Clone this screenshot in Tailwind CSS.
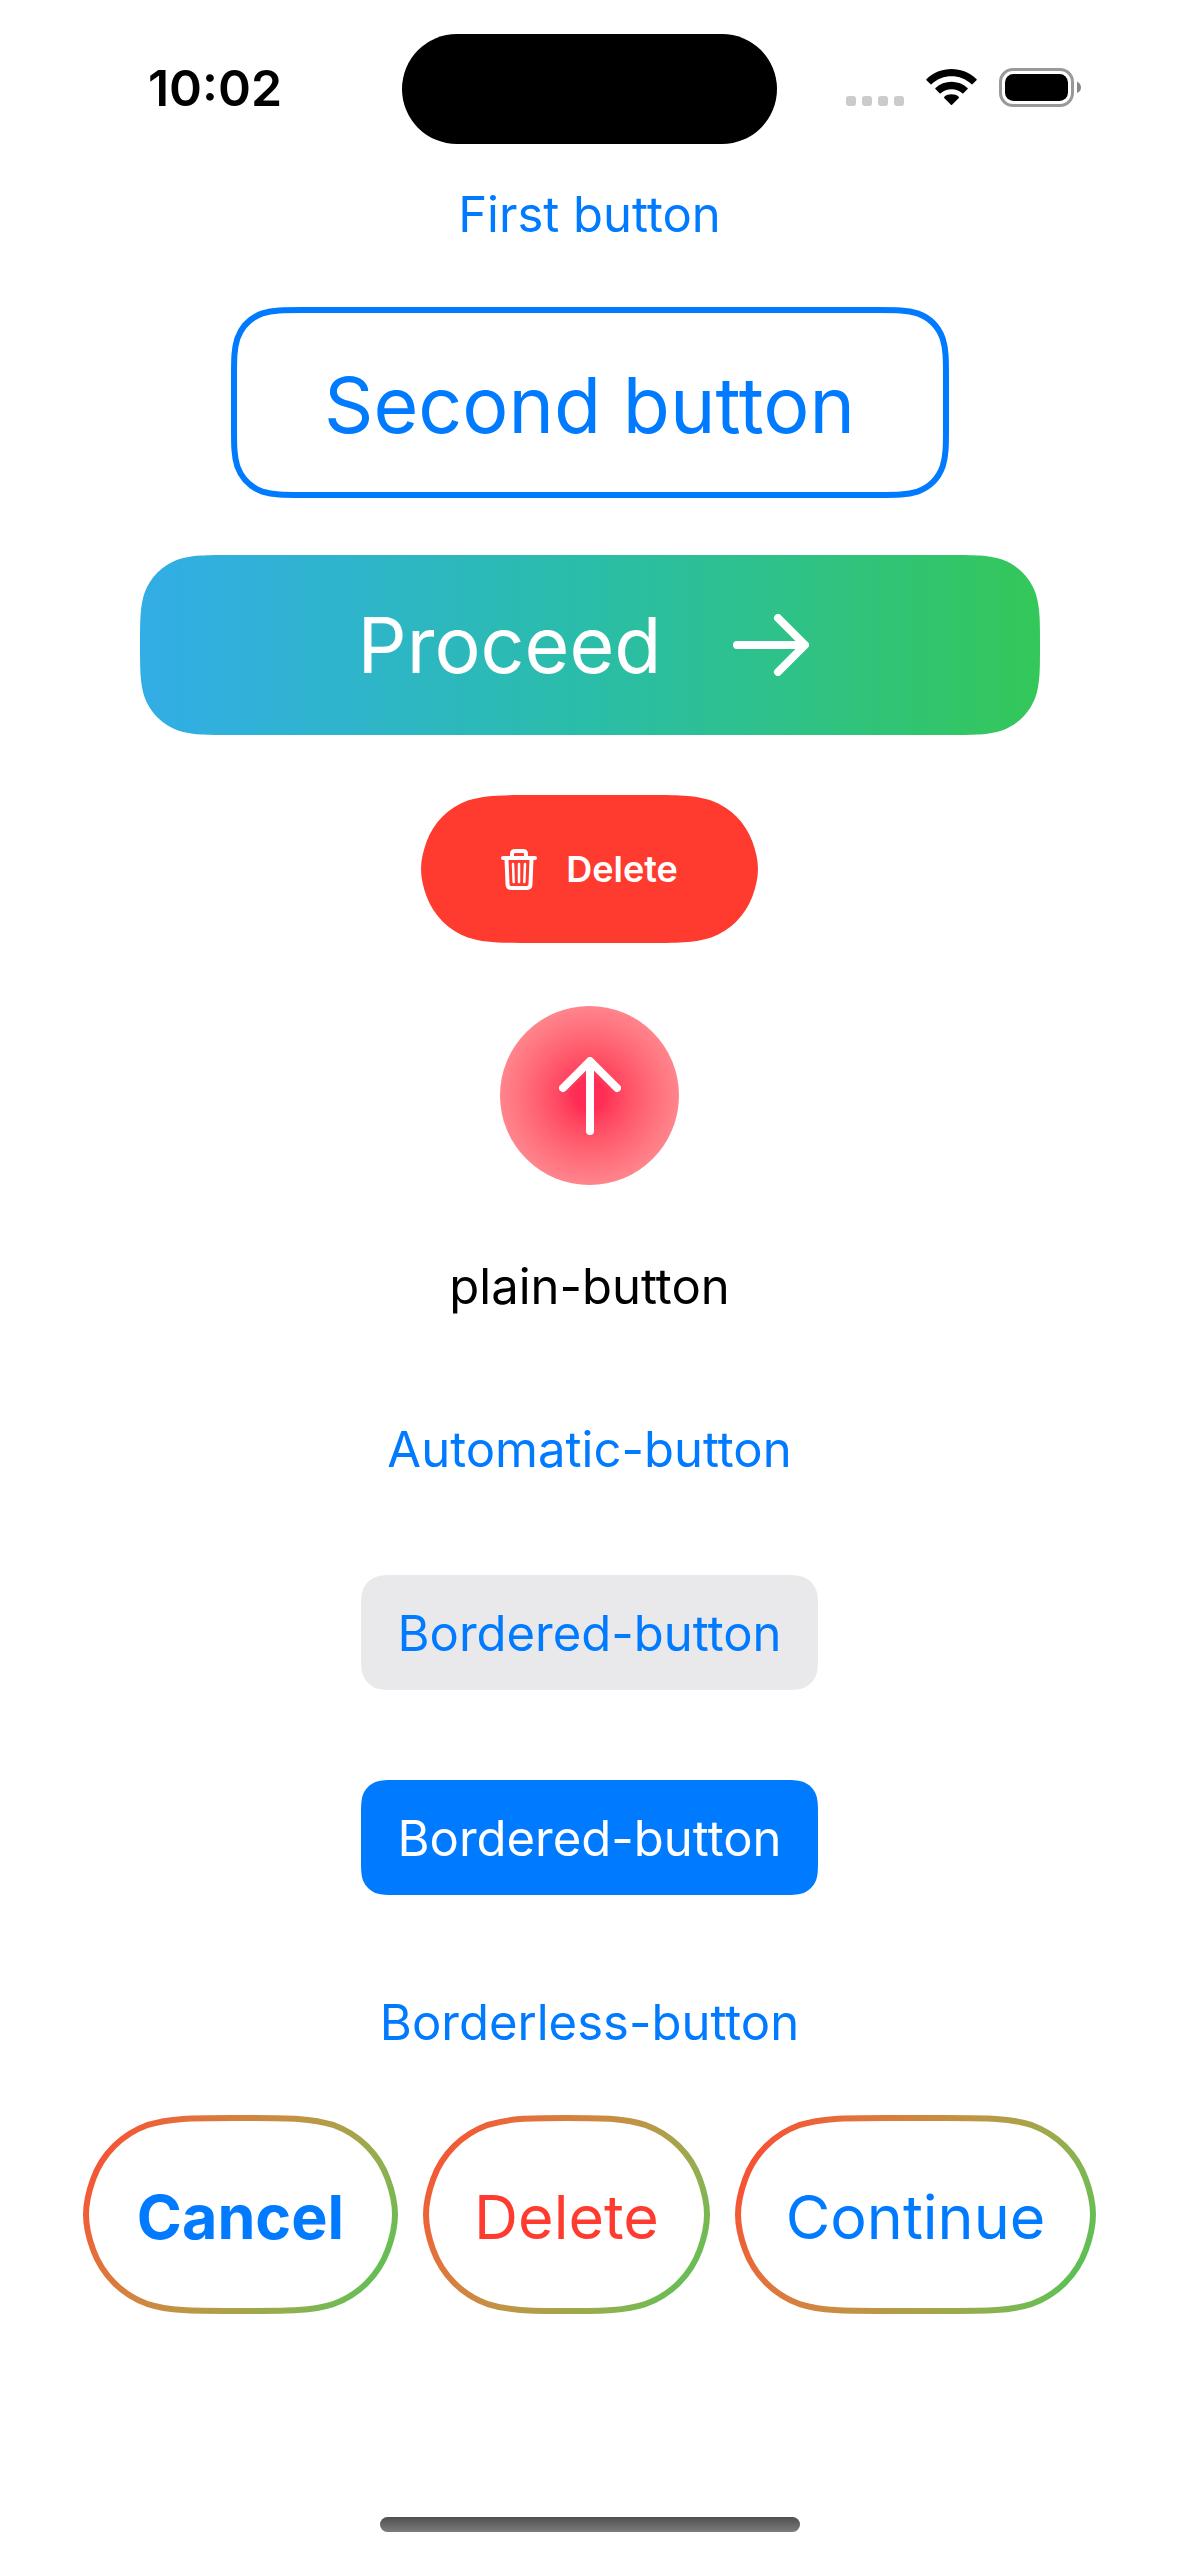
<!DOCTYPE html>
<html lang="en">
<head>
<meta charset="utf-8">
<meta name="viewport" content="width=device-width, initial-scale=1">
<title>Buttons</title>
<script src="https://cdn.jsdelivr.net/npm/@tailwindcss/browser@4"></script>
</head>
<body class="flex min-h-screen flex-col bg-white font-[Inter,sans-serif] text-[49px] leading-[60px] text-[#007aff]">
<header class="grid h-[185px] grid-cols-[1fr_375px_1fr] items-start pt-[34px] text-black">
  <time class="justify-self-center pt-[24px] pl-[28px] text-[50px] font-semibold">10:02</time>
  <div class="h-[110px] rounded-full bg-black"></div>
  <div class="flex justify-center pt-[32px] pr-[26px]">
    <svg class="h-[42px] w-[238px]" viewBox="0 0 238 42" role="img" aria-label="Wi-Fi connected, battery full">
      <g fill="#cbcbcb">
        <rect x="0" y="30" width="10" height="10" rx="3"/><rect x="16" y="30" width="10" height="10" rx="3"/><rect x="32" y="30" width="10" height="10" rx="3"/><rect x="48" y="30" width="10" height="10" rx="3"/>
      </g>
      <g transform="translate(80 3)">
        <path d="M.5 11.2Q0 10.7.6 10.100C13.500-3.300 37.500-3.300 50.400 10.100Q51 10.700 50.500 11.200L46.400 15.200Q45.900 15.700 45.300 15.100C34.500 4.700 16.500 4.700 5.700 15.100Q5.100 15.700 4.600 15.200Z"/>
        <path d="M9.400 20.100Q8.900 19.500 9.500 18.900C18.100 10.600 32.900 10.600 41.500 18.900Q42.100 19.500 41.600 20.100L37.400 24.200Q36.900 24.700 36.300 24.200C30.400 18.800 20.600 18.800 14.700 24.200Q14.100 24.700 13.600 24.200Z"/>
        <path d="M18.200 28.900Q17.700 28.300 18.300 27.700C22.100 24.500 28.900 24.500 32.700 27.700Q33.300 28.300 32.800 28.900L26.100 35.700Q25.500 36.300 24.900 35.700Z"/>
      </g>
      <rect x="154.500" y="3.500" width="72" height="36" rx="12.500" fill="none" stroke="#999" stroke-width="3"/>
      <rect x="159" y="8" width="63" height="27" rx="8.500"/>
      <path d="M231 15.500Q235 17.500 235 21.500T231 27Z" fill="#888"/>
    </svg>
  </div>
</header>

<main class="flex flex-col items-center">
  <button type="button">First button</button>

  <button type="button" class="relative mt-[62px] flex h-[191px] w-[718px] items-center justify-center pt-1 text-[77px]">
    <svg class="absolute inset-0 size-full" data-radius="45" data-line="6" fill="none" stroke="#007aff" aria-hidden="true"><path/></svg>
    <span class="relative">Second button</span>
  </button>

  <button type="button" class="relative mt-[57px] flex h-[180px] w-[900px] items-center justify-center gap-[72px] pr-3 text-[77px] text-white">
    <svg class="absolute inset-0 size-full" data-radius="60" fill="url(#sea)" aria-hidden="true">
      <defs><linearGradient id="sea"><stop offset="0" stop-color="#32ade6"/><stop offset=".25" stop-color="#2eb5c9"/><stop offset=".5" stop-color="#2abda8"/><stop offset=".75" stop-color="#2fc283"/><stop offset="1" stop-color="#34c759"/></linearGradient></defs>
      <path/>
    </svg>
    <span class="relative">Proceed</span>
    <svg class="relative h-[62px] w-[76px]" viewBox="0 0 76 62" fill="none" stroke="currentColor" stroke-width="8" stroke-linecap="round" stroke-linejoin="round" aria-hidden="true"><path d="M4 31H71M45 4L72 31L45 58"/></svg>
  </button>

  <button type="button" class="relative mt-[60px] flex h-[148px] w-[337px] items-center justify-center gap-[29px] text-[36px] font-semibold text-white">
    <svg class="absolute inset-0 size-full" data-radius="90" fill="#ff3b30" aria-hidden="true"><path/></svg>
    <svg class="relative h-[41px] w-[36px]" viewBox="0 0 36 41" fill="none" stroke="currentColor" stroke-linecap="round" stroke-linejoin="round" aria-hidden="true">
      <path stroke-width="4" d="M2 9H34M11 8V5Q11 2 14 2H22Q25 2 25 5V8M5.500 10L6.500 35Q6.600 39 10 39H26Q29.400 39 29.500 35L30.500 10"/>
      <path stroke-width="2.500" d="M12 15L12.700 33M18 15V33M24 15L23.300 33"/>
    </svg>
    <span class="relative">Delete</span>
  </button>

  <button type="button" aria-label="Up" class="mt-[63px] flex size-[179px] items-center justify-center rounded-full bg-[radial-gradient(circle_in_oklab,#ff2d55_15px,#ff858d_90px)] text-white">
    <svg class="h-[78px] w-[62px]" viewBox="0 0 62 78" fill="none" stroke="currentColor" stroke-width="8" stroke-linecap="round" stroke-linejoin="round" aria-hidden="true"><path d="M31 74V5M4 31L31 4L58 31"/></svg>
  </button>

  <button type="button" class="mt-[72px] text-black">plain-button</button>
  <button type="button" class="mt-[103px]">Automatic-button</button>

  <button type="button" class="relative mt-[95px] flex h-[115px] w-[457px] items-center justify-center pt-0.5">
    <svg class="absolute inset-0 size-full" data-radius="24" fill="#e9e9eb" aria-hidden="true"><path/></svg>
    <span class="relative">Bordered-button</span>
  </button>
  <button type="button" class="relative mt-[90px] flex h-[115px] w-[457px] items-center justify-center pt-0.5 text-white">
    <svg class="absolute inset-0 size-full" data-radius="24" fill="#007aff" aria-hidden="true"><path/></svg>
    <span class="relative">Bordered-button</span>
  </button>
  <button type="button" class="mt-[98px]">Borderless-button</button>

  <div class="mt-[62px] flex gap-[25px] text-[61px]">
    <button type="button" class="relative flex h-[199px] w-[315px] items-center justify-center pt-1 font-bold">
      <svg class="absolute inset-0 size-full" data-radius="100" data-line="6" data-gradient="cancel" fill="none" aria-hidden="true"><path/></svg>
      <span class="relative">Cancel</span>
    </button>
    <button type="button" class="relative flex h-[199px] w-[287px] items-center justify-center pt-1 text-[#ff3b30]">
      <svg class="absolute inset-0 size-full" data-radius="100" data-line="6" data-gradient="delete" fill="none" aria-hidden="true"><path/></svg>
      <span class="relative">Delete</span>
    </button>
    <button type="button" class="relative flex h-[199px] w-[361px] items-center justify-center pt-1">
      <svg class="absolute inset-0 size-full" data-radius="100" data-line="6" data-gradient="continue" fill="none" aria-hidden="true"><path/></svg>
      <span class="relative">Continue</span>
    </button>
  </div>
</main>

<footer class="mt-auto flex justify-center pb-[24px]">
  <div class="h-[15px] w-[420px] rounded-full bg-linear-to-b from-[#505050] to-[#7c7c7c]"></div>
</footer>

<script>
// Outline of a rectangle with continuous corners: the curve eases into each
// straight side, over as much of that side as is free.
function corner(r, ext) {
  const k = (ext / r - 1) / 0.52866;
  const mix = (a, b) => (a + (b - a) * k) * r;
  return { end: ext, outer: mix(0.875, 1.0885), inner: mix(0.749, 0.8684), lift: mix(0.032, 0) };
}
function outline(w, h, radius, inset) {
  const W = w - inset * 2, H = h - inset * 2;
  const r = Math.min(radius, W / 2, H / 2);
  const x = corner(r, Math.min(1.52866 * r, W / 2));
  const y = corner(r, Math.min(1.52866 * r, H / 2));
  const a = 0.6315 * r, b = 0.0749 * r, c = 0.3728 * r, d = 0.169 * r;
  const toSide = [[x.end, 0], [x.outer, 0], [x.inner, x.lift], [a, b], [c, d], [d, c], [b, a], [y.lift, y.inner], [0, y.outer], [0, y.end]];
  const place = (pts, fx, fy) => pts.map(([px, py]) => [inset + (fx ? W - px : px), inset + (fy ? H - py : py)]);
  const corners = [
    place(toSide, true, false),
    place([...toSide].reverse(), true, true),
    place(toSide, false, true),
    place([...toSide].reverse(), false, false)
  ];
  return corners.map((p, i) => (i ? 'L' : 'M') + p[0] + 'C' + p.slice(1).join(' ')).join('') + 'Z';
}
const stops = ['#ff3b30', '#f15b36', '#e3713b', '#d38340', '#c09445', '#aaa24a', '#91af4f', '#6cbc54', '#34c759'];
function draw(svg) {
  const { width: w, height: h } = svg.getBoundingClientRect();
  if (!w || !h) return;
  const { radius, line = 0, gradient } = svg.dataset;
  const path = svg.querySelector('path');
  path.setAttribute('d', outline(w, h, +radius, line / 2));
  path.setAttribute('stroke-width', line);
  if (gradient) {
    const fade = svg.querySelector('linearGradient');
    fade.setAttribute('x2', w);
    fade.setAttribute('y2', h);
  }
}
const sizes = new ResizeObserver(entries => entries.forEach(e => draw(e.target)));
document.querySelectorAll('svg[data-radius]').forEach(svg => {
  const { gradient } = svg.dataset;
  if (gradient) {
    svg.insertAdjacentHTML('afterbegin', `<defs><linearGradient id="${gradient}" gradientUnits="userSpaceOnUse" x1="0" y1="0">` +
      stops.map((s, i) => `<stop offset="${i / 8}" stop-color="${s}"/>`).join('') + '</linearGradient></defs>');
    svg.querySelector('path').setAttribute('stroke', `url(#${gradient})`);
  }
  sizes.observe(svg);
});
</script>
</body>
</html>
